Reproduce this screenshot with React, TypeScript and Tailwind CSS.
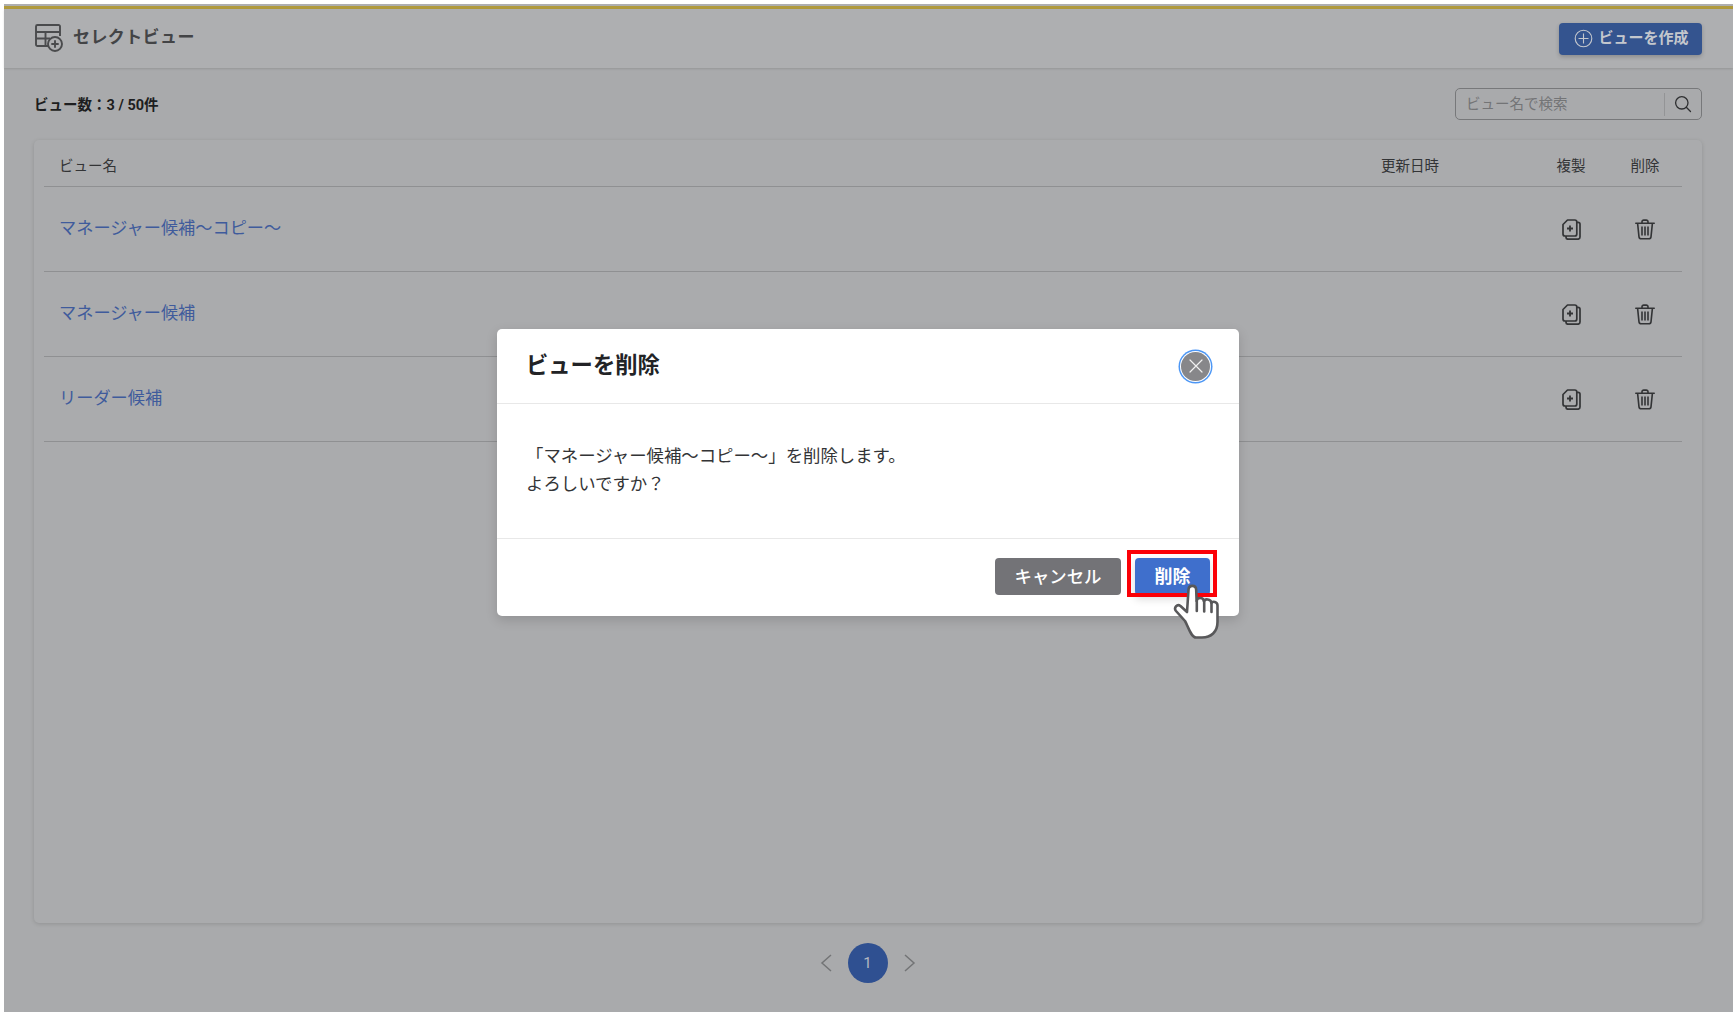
import React from "react";

const FONT = '"Roboto", "Noto Sans CJK JP", sans-serif';

function TableAddIcon() {
  return (
    <svg className="mb-[2px]" width="28" height="28" viewBox="0 0 28 28" fill="none" stroke="#4a4b4d" strokeWidth="1.900">
      <path d="M14 22H2.500A1.500 1.500 0 0 1 1 20.500v-18A1.500 1.500 0 0 1 2.500 1h21A1.500 1.500 0 0 1 25 2.500V12" />
      <path d="M1 8h24M1 14.500h14M10.500 8v14" />
      <circle cx="20" cy="20" r="7" />
      <path d="M20 16.300v7.400M16.300 20h7.400" />
    </svg>
  );
}

function CopyIcon() {
  return (
    <svg width="19" height="21" viewBox="0 0 19 21" fill="none" stroke="#333436" strokeWidth="1.700" strokeLinejoin="round">
      <path d="M5.500 1h7.300a2 2 0 0 1 2 2v12a2 2 0 0 1-2 2H3a2 2 0 0 1-2-2V5.500z" />
      <path d="M14.800 3.300h1.200a2 2 0 0 1 2 2V18a2.200 2.200 0 0 1-2.200 2.200H6a2 2 0 0 1-2-2V17" />
      <path d="M8 6.500v6M5 9.500h6" strokeWidth="1.800" />
    </svg>
  );
}

function TrashIcon() {
  return (
    <svg width="20" height="21" viewBox="0 0 20 21" fill="none" stroke="#333436" strokeWidth="1.600" strokeLinejoin="round">
      <path d="M.8 4.300h18.400" strokeLinecap="round" />
      <path d="M7 4.300V2.800A1.700 1.700 0 0 1 8.700 1.100h2.600A1.700 1.700 0 0 1 13 2.800v1.500" />
      <path d="M2.600 4.300 4 17.800a2.300 2.300 0 0 0 2.300 2h7.400a2.300 2.300 0 0 0 2.300-2l1.400-13.500" />
      <path d="M7 7.500v9M10 7.500v9M13 7.500v9" />
    </svg>
  );
}

function Row({ name }: { name: string }) {
  return (
    <div className="flex h-[85px] items-center border-b border-[#8f9092] pl-[15px]">
      <a className="flex-1 pb-[1px] text-[17.200px] text-[#3f5b9c]">{name}</a>
      <div className="flex w-[74px] justify-center"><CopyIcon /></div>
      <div className="flex w-[74px] justify-center"><TrashIcon /></div>
    </div>
  );
}

export default function App() {
  return (
    <div className="relative h-[1012px] w-[1733px] overflow-hidden bg-white" style={{ fontFamily: FONT }}>
      <div className="mt-[4px] ml-[4px] flex h-[1008px] flex-col bg-[#a9aaac]">
        <div className="h-[2px] bg-[#adaeb0]" />
        <div className="h-[3px] bg-[#b09a3d]" />
        <header className="flex h-[59px] items-center justify-between bg-[#aeafb1] pl-[31px] pr-[31px] shadow-[0_1px_2px_rgba(0,0,0,0.12)]">
          <div className="flex items-center gap-[10px]">
            <TableAddIcon />
            <span className="pb-[1px] text-[17px] font-bold tracking-[0.4px] text-[#434446]">セレクトビュー</span>
          </div>
          <button className="flex h-[32px] w-[143px] items-center justify-center gap-[5px] rounded-[4px] bg-[#34548f] pl-[2px] text-[15px] font-bold text-[#c4c7cd] shadow-[0_2px_4px_rgba(0,0,0,0.2)]">
            <svg width="19" height="19" viewBox="0 0 19 19" fill="none" stroke="#c4c7cd" strokeWidth="1.100">
              <circle cx="9.500" cy="9.500" r="8.300" />
              <path d="M9.500 4.500v10M4.500 9.500h10" />
            </svg>
            ビューを作成
          </button>
        </header>

        <div className="flex h-[72px] items-center justify-between pl-[30px] pr-[31px]">
          <span className="pt-[3px] text-[14.500px] font-bold text-[#1d1e20]">ビュー数：3 / 50件</span>
          <div className="flex h-[32px] w-[247px] items-center rounded-[5px] border border-[#77787a]">
            <span className="flex-1 pl-[10px] pt-[2px] text-[14.500px] text-[#737476]">ビュー名で検索</span>
            <div className="flex h-[23px] w-[37px] items-center justify-center border-l border-[#939496]">
              <svg width="18" height="18" viewBox="0 0 18 18" fill="none" stroke="#2e2f31" strokeWidth="1.300" strokeLinecap="round">
                <circle cx="7.800" cy="7.800" r="6.200" />
                <path d="m12.300 12.300 4.200 4.200" />
              </svg>
            </div>
          </div>
        </div>

        <main className="ml-[30px] mr-[31px] flex h-[783px] flex-col rounded-[5px] bg-[#aaabad] pl-[10px] pr-[20px] shadow-[0_1px_4px_rgba(0,0,0,0.14)]">
          <div className="flex h-[47px] items-center border-b border-[#8f9092] pl-[15px] pt-[8px] text-[14.500px] text-[#333436]">
            <span className="flex-1">ビュー名</span>
            <span className="w-[153px]">更新日時</span>
            <span className="w-[74px] text-center">複製</span>
            <span className="w-[74px] text-center">削除</span>
          </div>
          <Row name="マネージャー候補～コピー～" />
          <Row name="マネージャー候補" />
          <Row name="リーダー候補" />
        </main>

        <nav className="flex flex-1 items-center justify-center gap-[15px] pb-[9px] pr-[2px]">
          <svg width="14" height="20" viewBox="0 0 14 20" fill="none" stroke="#737476" strokeWidth="1.500"><path d="M12 2 3 10l9 8" /></svg>
          <span className="flex h-[40px] w-[40px] items-center justify-center rounded-full bg-[#2f5091] text-[15px] text-[#b4b8c0]">1</span>
          <svg width="14" height="20" viewBox="0 0 14 20" fill="none" stroke="#737476" strokeWidth="1.500"><path d="m2 2 9 8-9 8" /></svg>
        </nav>
      </div>

      <div
        role="dialog"
        className="absolute left-[497px] top-[329px] flex h-[287px] w-[742px] flex-col rounded-[5px] bg-white shadow-[0_4px_12px_rgba(0,0,0,0.15)]"
      >
        <div className="flex h-[75px] items-center justify-between border-b border-[#e8e8e8] pl-[29px] pr-[29px]">
          <h2 className="-mt-[1px] text-[22.300px] font-bold text-[#222326]">ビューを削除</h2>
          <button className="flex h-[29px] w-[29px] items-center justify-center rounded-full bg-[#87878a] shadow-[0_0_0_1px_#fff,0_0_0_2.500px_#4d97f5]">
            <svg width="16" height="16" viewBox="0 0 16 16" stroke="#f0f0f0" strokeWidth="1.200" strokeLinecap="round"><path d="m2 2 12 12M14 2 2 14" /></svg>
          </button>
        </div>
        <div className="flex h-[135px] flex-col justify-center border-b border-[#e8e8e8] pl-[29px] pb-[3px] text-[17.400px] leading-[28px] text-[#333436]">
          <p>「マネージャー候補～コピー～」を削除します。</p>
          <p>よろしいですか？</p>
        </div>
        <div className="flex flex-1 items-center justify-end gap-[14px] pr-[29px] pb-[2px]">
          <button className="flex h-[37px] w-[126px] items-center justify-center rounded-[4px] bg-[#737377] pt-[1px] text-[17.400px] font-medium text-white">キャンセル</button>
          <button className="flex h-[37px] w-[75px] items-center justify-center rounded-[4px] bg-[#3f6fcc] text-[18px] font-bold text-white shadow-[0_4px_8px_rgba(0,0,0,0.15)]">削除</button>
        </div>
        <div className="absolute left-[630px] top-[221px] h-[47px] w-[90px] border-[4px] border-[#fb0007]" />
        <svg className="absolute left-[676px] top-[255px]" width="47" height="55" viewBox="0 0 47 55" fill="#fff" stroke="#58585a" strokeWidth="2.600" strokeLinejoin="round" strokeLinecap="round">
          <path d="M12 37 L3 27 C0.500 24 4 19.500 7.500 22 L14 28 L15.500 6 C15.700 0.500 23 0.500 23.200 6 L23.600 17 C24 13 30.500 13 31 17.500 C31.500 14.500 38 14.500 38.500 19 C39.500 17 44.500 17.500 44.500 21.500 L44.500 38 C44.500 48 38 53.500 29 53.500 L23 53.500 C18 53.500 15 42 12 37 Z" />
          <path d="M23.800 17v10M31.200 17.500v10M38.500 19v9" fill="none" />
        </svg>
      </div>
    </div>
  );
}
